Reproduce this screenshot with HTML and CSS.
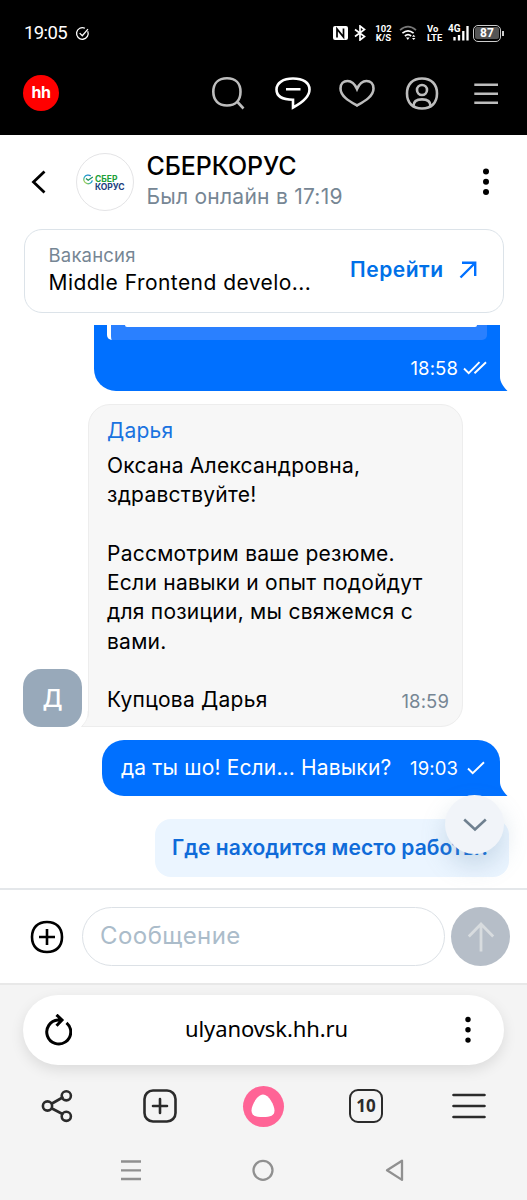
FILE: index.html
```
<!DOCTYPE html>
<html lang="ru">

<head>
    <meta charset="utf-8">
    <meta name="viewport" content="width=device-width, initial-scale=1.0">
    <title>СБЕРКОРУС</title>
    <link rel="stylesheet" href="styles.css">
</head>

<body>

    <div class="status">
        <span class="clock">19:05</span>
        <svg class="status-check" width="15" height="15" viewBox="0 0 16 16">
            <path d="M13.600 5.600a6.200 6.200 0 1 1-3-3.200M5 7.600l2.800 2.800 6-7" />
        </svg>
        <div class="status-right">
            <svg class="nfc" width="15" height="14" viewBox="0 0 15 14">
                <rect width="15" height="14" rx="2" fill="#fff" />
                <path d="M4 11.500V3l6.500 8V2.500" fill="none" stroke="#000" stroke-width="1.700" />
            </svg>
            <svg class="bt" width="12" height="16" viewBox="0 0 12 16">
                <path d="M1 4.500l9.500 7L6 15V1l4.500 3.500L1 11.500" fill="none" stroke="#fff" stroke-width="1.700" />
            </svg>
            <div class="two-line speed"><span>102</span><span>K/S</span></div>
            <svg class="wifi" width="18" height="16" viewBox="0 0 18 16">
                <g fill="none" stroke="#fff" stroke-width="1.700">
                    <path d="M1 5.200q8-7 16 0" stroke="#777" />
                    <path d="M3.400 8.200q5.600-4.800 11.200 0" />
                    <path d="M5.900 11q3.100-2.700 6.200 0" />
                </g>
                <path d="M7 12.500h3.600L8.800 15zM13 11.700l1.700-2 1.700 2zM13 12.900h3.400l-1.700 2z" fill="#fff" />
            </svg>
            <div class="two-line lte"><span>Vo</span><span>LTE</span></div>
            <div class="signal">
                <span>4G</span>
                <svg width="21" height="16" viewBox="0 0 21 16">
                    <path d="M6.500 12v3.500M11 10v5.500M15.300 6v9.500M19.500 1v14.500" stroke="#fff" stroke-width="2.300" />
                </svg>
            </div>
            <div class="battery"><span>87</span></div>
        </div>
    </div>

    <header class="topbar">
        <div class="logo">hh</div>
        <nav>
            <svg viewBox="0 0 36 36">
                <path d="M17 3.300c8.500 0 13.500 5 13.500 13.500S25.500 30.500 17 30.500 3.300 25.200 3.300 16.800 8.500 3.300 17 3.300zM27 26.500l6.500 7" />
            </svg>
            <svg class="active" viewBox="0 0 36 36">
                <path d="M18 3.500c10 0 16.500 4 16.500 11 0 8-8 13.500-16.500 18v-7.800C7.500 24.700 1.500 21 1.500 14.500S8 3.500 18 3.500zM11 14.200h14.500" />
            </svg>
            <svg viewBox="0 0 36 36">
                <path d="M18 30.500C11 26.500 1.500 21.500 1.500 13.500 1.500 8.500 4.500 6 8.500 6c4.500 0 7.500 3.500 9.500 8 2-4.500 5-8 9.500-8 4 0 7 2.500 7 7.500 0 8-9.500 13-16.500 17z" />
            </svg>
            <svg viewBox="0 0 36 36">
                <path d="M18 3.500c9.300 0 15 5.700 15 15s-5.700 15-15 15-15-5.700-15-15 5.700-15 15-15z" />
                <circle cx="18" cy="15" r="5" />
                <path d="M9.500 31c0-5 3.500-6.600 8.500-6.600s8.500 1.600 8.500 6.600" />
            </svg>
            <svg viewBox="0 0 36 36">
                <path d="M6.300 9.700H30M6.300 18.700H30M6.300 27.700H30" />
            </svg>
        </nav>
    </header>

    <section class="chat-head">
        <svg class="back" width="15" height="24" viewBox="0 0 15 24">
            <path d="M13.500 1.500L2.500 12l11 10.500" />
        </svg>
        <div class="company-logo">
            <svg width="12" height="11" viewBox="0 0 12 11">
                <defs>
                    <linearGradient id="ring" x1="0" y1="1" x2="1" y2="0">
                        <stop offset="0" stop-color="#d8e021" />
                        <stop offset=".45" stop-color="#21a8c9" />
                        <stop offset="1" stop-color="#1f72c9" />
                    </linearGradient>
                </defs>
                <path d="M9.300 6.300a4.300 4.300 0 1 1-1.500-4.200" fill="none" stroke="url(#ring)" stroke-width="1.300" />
                <path d="M3 4.500l2.200 1.700 4.600-3.200" fill="none" stroke="#1a8f5a" stroke-width="1.300" />
            </svg>
            <div class="company-logo-text"><span class="green">СБЕР</span><span>КОРУС</span></div>
        </div>
        <div class="chat-title">
            <h1>СБЕРКОРУС</h1>
            <p>Был онлайн в 17:19</p>
        </div>
        <svg class="dots" width="6" height="28" viewBox="0 0 6 28">
            <circle cx="3" cy="3.500" r="3" />
            <circle cx="3" cy="13.800" r="3" />
            <circle cx="3" cy="24.100" r="3" />
        </svg>
    </section>

    <section class="vacancy">
        <div>
            <p class="vacancy-label">Вакансия</p>
            <p class="vacancy-name">Middle Frontend develo...</p>
        </div>
        <a class="vacancy-link"><span>Перейти</span>
            <svg width="18" height="18" viewBox="0 0 18 18">
                <path d="M1.500 16.500L16 2M3 1.800h13.200V15" />
            </svg>
        </a>
    </section>

    <main class="chat">
        <div class="msg mine cut">
            <div class="quote"><i></i></div>
            <div class="meta"><span>18:58</span>
                <svg width="24" height="14" viewBox="0 0 24 14">
                    <path d="M1 7.500l4.700 4.700L16.500 1.200M11.500 12.200L23 1.200" />
                </svg>
            </div>
            <svg class="tail" width="9" height="14" viewBox="0 0 9 14">
                <path d="M0 0h1c0 5 3 9 7.500 14H0z" />
            </svg>
        </div>

        <div class="row">
            <div class="avatar">Д</div>
            <div class="msg theirs">
                <p class="author">Дарья</p>
                <p class="text">Оксана Александровна,<br>здравствуйте!<br><br>Рассмотрим ваше резюме.<br>Если навыки и опыт подойдут<br>для позиции, мы свяжемся с<br>вами.<br><br>Купцова Дарья</p>
                <span class="time">18:59</span>
                <svg class="tail-left" width="8" height="16" viewBox="0 0 8 16">
                    <path d="M8 0c0 7-2 11-7.500 15.500H8z" fill="#f7f7f7" />
                    <path d="M7.200 0c0 7-2 11-6.700 15.500H8" fill="none" stroke="#ededed" />
                </svg>
            </div>
        </div>

        <div class="msg mine short">
            <span class="text">да ты шо! Если... Навыки?</span>
            <div class="meta"><span>19:03</span>
                <svg width="18" height="14" viewBox="0 0 18 14">
                    <path d="M1 7.500l4.700 4.700L17 1.200" />
                </svg>
            </div>
            <svg class="tail" width="9" height="14" viewBox="0 0 9 14">
                <path d="M0 0h1c0 5 3 9 7.500 14H0z" />
            </svg>
        </div>

        <button class="hint">Где находится место работы?</button>

        <button class="scroll-down">
            <svg width="24" height="14" viewBox="0 0 24 14">
                <path d="M1.200 1.500L12 11.500l10.800-10" />
            </svg>
        </button>
    </main>

    <section class="composer">
        <svg class="attach" width="34" height="34" viewBox="0 0 34 34">
            <path d="M17 2c9.300 0 15 5.700 15 15s-5.700 15-15 15S2 26.300 2 17 7.700 2 17 2zM9 17h16M17 9v16" />
        </svg>
        <div class="input">Сообщение</div>
        <button class="send">
            <svg width="28" height="30" viewBox="0 0 28 30">
                <path d="M14 29.500V2M1.800 14.500L14 2l12.200 12.500" />
            </svg>
        </button>
    </section>

    <footer class="browser">
        <div class="address">
            <svg class="reload" width="28" height="32" viewBox="0 0 28 32">
                <path d="M22.500 8.800A12 12 0 1 1 14 6h3M12.500 0.800l5.500 5.200-5.500 5.800" />
            </svg>
            <span>ulyanovsk.hh.ru</span>
            <svg class="dots" width="6" height="28" viewBox="0 0 6 28">
                <circle cx="3" cy="3.500" r="2.700" />
                <circle cx="3" cy="13.800" r="2.700" />
                <circle cx="3" cy="24.100" r="2.700" />
            </svg>
        </div>

        <div class="tools">
            <svg width="36" height="36" viewBox="0 0 36 36">
                <path d="M13 15.500l10.500-6M13 20.500l10.500 5.500" />
                <circle cx="8.500" cy="18" r="4.600" />
                <circle cx="27.300" cy="7.800" r="4.600" />
                <circle cx="27.300" cy="28.300" r="4.600" />
            </svg>
            <svg width="36" height="36" viewBox="0 0 36 36">
                <rect x="2.500" y="2.500" width="31" height="31" rx="8.500" />
                <path d="M11 18h14M18 11v14" />
            </svg>
            <div class="alice">
                <svg width="24" height="24" viewBox="0 0 24 24">
                    <path d="M12 .500c6 0 11.500 11 11.500 16 0 5-4 6.500-11.500 6.500S.500 21.500.500 16.500c0-5 5.500-16 11.500-16z" />
                </svg>
            </div>
            <div class="tabs">10</div>
            <svg width="36" height="36" viewBox="0 0 36 36">
                <path d="M2.500 7h31M2.500 18h31M2.500 29h31" />
            </svg>
        </div>

        <div class="system">
            <svg width="22" height="24" viewBox="0 0 22 24">
                <path d="M1 3.500h20M1 12.300h20M1 21h20" />
            </svg>
            <svg width="22" height="24" viewBox="0 0 22 24">
                <circle cx="11" cy="12.300" r="9.500" />
            </svg>
            <svg width="22" height="24" viewBox="0 0 22 24">
                <path d="M18 2.700v19.200L3 12.300z" />
            </svg>
        </div>
    </footer>

</body>

</html>
```
FILE: styles.css
```
* {
    box-sizing: border-box;
}

body {
    margin: 0;
    background-color: #fff;
    color: #000;
    font-family: Inter, sans-serif;
    font-size: 21px;
    letter-spacing: 0.25px;
}

h1,
p {
    margin: 0;
}

svg {
    display: block;
    flex: none;
}

button {
    border: none;
    padding: 0;
    font-family: inherit;
}

/* status bar */

.status {
    display: flex;
    align-items: center;
    height: 66px;
    padding: 0 25px 0 24px;
    background-color: #000;
    color: #fff;
    font-family: Roboto, sans-serif;
    letter-spacing: 0;
}

.clock {
    width: 51px;
    font-size: 18.5px;
    line-height: 20px;
    letter-spacing: -0.6px;
}

.status-check path {
    fill: none;
    stroke: #fff;
    stroke-width: 1.4;
}

.status-right {
    display: flex;
    align-items: center;
    margin-left: auto;
}

.bt {
    margin-left: 6px;
}

.two-line {
    display: flex;
    flex-direction: column;
    font-size: 9.5px;
    font-weight: 700;
    line-height: 9px;
    white-space: nowrap;
}

.speed {
    width: 17px;
    margin-left: 9px;
    align-items: center;
}

.wifi {
    margin-left: 7px;
}

.lte {
    width: 15px;
    margin-left: 10px;
}

.signal {
    position: relative;
    margin-left: 6px;
}

.signal span {
    position: absolute;
    left: 0;
    top: -1px;
    font-size: 10px;
    font-weight: 700;
    line-height: 10px;
}

.battery {
    position: relative;
    width: 28px;
    height: 17px;
    margin-left: 4px;
    margin-right: 1px;
    padding: 1px;
    border: 1.5px solid #ccc;
    border-radius: 5px;
    font-size: 12px;
    font-weight: 700;
    line-height: 12px;
    text-align: center;
}

.battery span {
    display: block;
    background-color: #555;
    border-radius: 2px;
}

.battery::after {
    content: "";
    position: absolute;
    right: -4px;
    top: 5px;
    width: 2px;
    height: 5px;
    background-color: #ccc;
}

/* site header */

.topbar {
    display: flex;
    align-items: center;
    justify-content: space-between;
    height: 69px;
    padding: 0 23px 15px;
    background-color: #000;
}

.logo {
    width: 36px;
    height: 36px;
    border-radius: 50%;
    background-color: #f00;
    color: #fff;
    font-size: 16px;
    font-weight: 700;
    line-height: 35px;
    text-align: center;
    letter-spacing: -0.5px;
}

.topbar nav {
    display: flex;
    gap: 28.5px;
}

.topbar svg {
    width: 36px;
    height: 36px;
    fill: none;
    stroke: #bdbdbd;
    stroke-width: 2.6;
}

.topbar svg.active {
    stroke: #fff;
}

/* chat header */

.chat-head {
    display: flex;
    align-items: center;
    height: 94px;
    padding: 0 38px 0 31px;
}

.back path {
    fill: none;
    stroke: #000;
    stroke-width: 2.8;
}

.company-logo {
    display: flex;
    align-items: flex-start;
    width: 58px;
    height: 58px;
    margin-left: 30px;
    padding: 20px 0 0 6px;
    border: 1px solid #e4e4e6;
    border-radius: 50%;
}

.company-logo-text {
    display: flex;
    flex-direction: column;
    padding-top: 1px;
    color: #21407e;
    font-size: 8.5px;
    font-weight: 700;
    line-height: 8px;
    letter-spacing: 0;
}

.company-logo-text .green {
    color: #21a038;
}

.chat-title {
    margin-left: 12.5px;
    padding-bottom: 3px;
}

.chat-title h1 {
    font-size: 25px;
    font-weight: 500;
    line-height: 32px;
    letter-spacing: -0.1px;
}

.chat-title p {
    color: #768694;
    font-size: 21px;
    line-height: 29px;
    letter-spacing: 0.25px;
}

.chat-head .dots {
    margin-left: auto;
}

/* vacancy card */

.vacancy {
    display: flex;
    align-items: center;
    justify-content: space-between;
    height: 84px;
    margin: 0 23.5px;
    padding: 0 26px 3px 24px;
    border: 1.5px solid #dce3e9;
    border-radius: 18px;
}

.vacancy-label {
    color: #768694;
    font-size: 18.5px;
    line-height: 26px;
    letter-spacing: 0.2px;
}

.vacancy-name {
    line-height: 29px;
    letter-spacing: 0.45px;
}

.vacancy-link {
    display: flex;
    align-items: center;
    gap: 15px;
    color: #0070e8;
    font-weight: 600;
    letter-spacing: 0.5px;
}

.vacancy-link path {
    fill: none;
    stroke: #0070ff;
    stroke-width: 2.4;
}

/* messages */

.chat {
    position: relative;
    display: flex;
    flex-direction: column;
    height: 563px;
    margin-top: 12px;
    overflow: hidden;
}

.msg {
    position: relative;
}

.mine {
    align-self: flex-end;
    margin-right: 27px;
    background-color: #0070ff;
    color: #fff;
}

.cut {
    width: 406px;
    height: 66px;
    padding: 0 13px;
    border-radius: 0 0 0 22px;
}

.quote {
    height: 15px;
    padding: 0 10px 0 14px;
    border-left: 4.5px solid #fff;
    border-radius: 0 0 5px 5px;
    background-color: #2a80ff;
}

.quote i {
    display: block;
    height: 2px;
    border-radius: 0 0 3px 3px;
    background-color: #fff;
}

.meta {
    display: flex;
    align-items: center;
    justify-content: flex-end;
    gap: 5px;
    font-size: 18.5px;
    letter-spacing: 0.1px;
}

.cut .meta {
    height: 55px;
}

.meta path {
    fill: none;
    stroke: #fff;
    stroke-width: 1.9;
}

.tail {
    position: absolute;
    left: calc(100% - 1px);
    bottom: 0;
    fill: #0070ff;
}

.row {
    display: flex;
    align-items: flex-end;
    margin: 13px 0 13px 23px;
}

.avatar {
    width: 59px;
    height: 58px;
    border-radius: 18px;
    background-color: #98a9ba;
    color: #fff;
    font-size: 24px;
    font-weight: 500;
    line-height: 60px;
    letter-spacing: 0;
    text-align: center;
}

.theirs {
    width: 375px;
    height: 323px;
    margin-left: 6px;
    padding: 11px 18px;
    border: 1px solid #ededed;
    border-radius: 22px 22px 22px 0;
    background-color: #f7f7f7;
}

.tail-left {
    position: absolute;
    left: -8px;
    bottom: -1px;
}

.author {
    margin-bottom: 6px;
    color: #1a73e0;
    line-height: 29px;
}

.theirs .text {
    line-height: 29.3px;
    white-space: nowrap;
}

.time {
    position: absolute;
    right: 13px;
    bottom: 14px;
    color: #768694;
    font-size: 18.5px;
    letter-spacing: 0.1px;
}

.short {
    display: flex;
    align-items: center;
    justify-content: space-between;
    width: 398px;
    height: 56px;
    padding: 0 15px 1px 19px;
    border-radius: 22px 22px 0 22px;
}

.short .text {
    letter-spacing: 0.15px;
}

.short .meta {
    gap: 9px;
}

.hint {
    align-self: flex-end;
    width: 354px;
    height: 58px;
    margin: 23px 18px 0 0;
    padding: 0 0 1px 17px;
    border-radius: 16px;
    background-color: #ebf5ff;
    color: #0f6bd9;
    font-size: 21px;
    font-weight: 600;
    letter-spacing: 0.05px;
    text-align: left;
    white-space: nowrap;
}

.scroll-down {
    position: absolute;
    right: 23px;
    bottom: 34px;
    display: flex;
    align-items: center;
    justify-content: center;
    width: 59px;
    height: 59px;
    border-radius: 50%;
    background-color: #f1f4f9;
    box-shadow: 0 12px 24px rgba(112, 146, 177, 0.28);
}

.scroll-down path {
    fill: none;
    stroke: #6f8090;
    stroke-width: 2.6;
}

/* message form */

.composer {
    display: flex;
    align-items: center;
    height: 97px;
    padding: 0 17px 0 30px;
    border-top: 2px solid #e4e7ea;
    border-bottom: 2px solid #e8e8e8;
}

.attach path {
    fill: none;
    stroke: #000;
    stroke-width: 2.6;
}

.input {
    width: 363px;
    height: 59px;
    margin: 0 6px 0 18px;
    padding-left: 17px;
    border: 1.5px solid #dce1e6;
    border-radius: 30px;
    color: #abbcca;
    font-size: 24px;
    line-height: 56px;
    letter-spacing: 0.45px;
}

.send {
    display: flex;
    align-items: center;
    justify-content: center;
    width: 59px;
    height: 59px;
    border-radius: 50%;
    background-color: #b6bec8;
}

.send path {
    fill: none;
    stroke: #d8dcdf;
    stroke-width: 2.8;
}

/* mobile browser panel */

.browser {
    height: 215px;
    padding: 10px 23px 0;
    background-color: #f4f4f4;
}

.address {
    display: flex;
    align-items: center;
    justify-content: space-between;
    height: 70px;
    padding: 0 33px 0 21px;
    border-radius: 35px;
    background-color: #fff;
    box-shadow: 0 5px 14px rgba(0, 0, 0, 0.1);
    font-family: "Noto Sans", sans-serif;
    font-size: 22px;
    letter-spacing: -0.1px;
}

.address span {
    padding: 0 4px 4px 0;
}

.reload path {
    fill: none;
    stroke: #000;
    stroke-width: 3;
}

.tools {
    display: flex;
    align-items: center;
    justify-content: space-between;
    height: 82px;
    padding: 0 17px 0 16px;
}

.tools > svg {
    fill: none;
    stroke: #2b2b2b;
    stroke-width: 2.6;
    stroke-linecap: round;
}

.alice {
    display: flex;
    align-items: center;
    justify-content: center;
    width: 41px;
    height: 41px;
    margin: 0 -2.5px;
    border-radius: 50%;
    background-color: #ff6496;
}

.alice svg {
    fill: #fff;
}

.tabs {
    width: 34px;
    height: 34px;
    margin: 0 1px;
    border: 2.6px solid #2b2b2b;
    border-radius: 9px;
    color: #2b2b2b;
    font-family: "Noto Sans", sans-serif;
    font-size: 17px;
    font-weight: 700;
    line-height: 29px;
    letter-spacing: 0;
    text-align: center;
}

.system {
    display: flex;
    justify-content: space-between;
    padding: 11px 98px 0 97px;
}

.system svg {
    fill: none;
    stroke: #909090;
    stroke-width: 2.3;
    stroke-linejoin: round;
}
```
